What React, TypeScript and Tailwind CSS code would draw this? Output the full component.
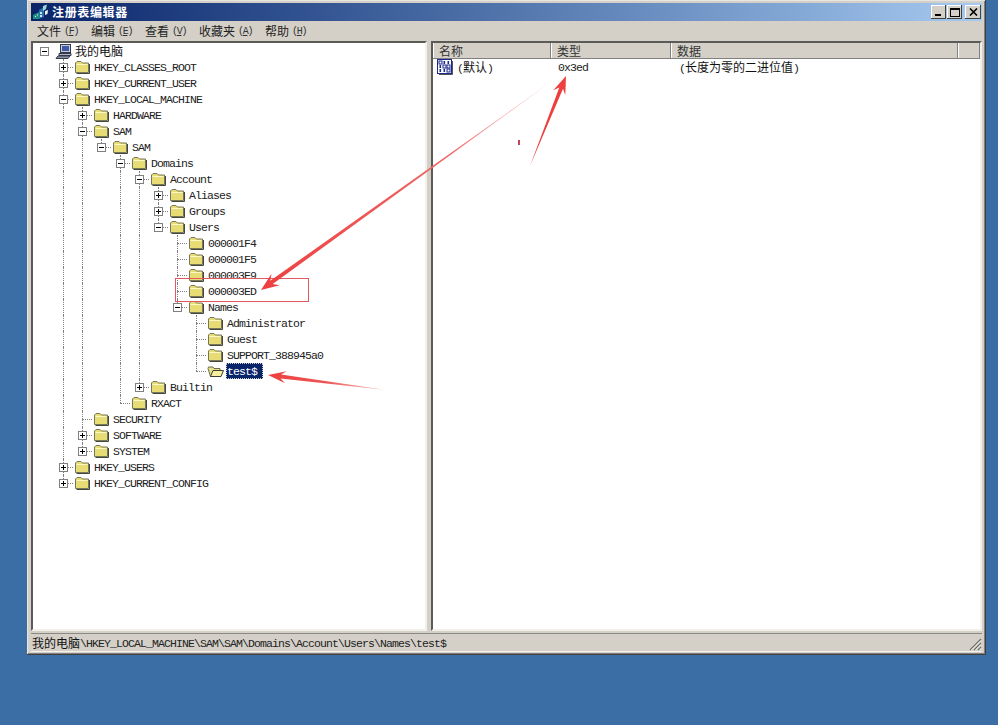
import React from "react";

type Node = { label: string; kids?: Node[]; plus?: boolean; selected?: boolean };

const tree: Node = {
  label: "我的电脑",
  kids: [
    { label: "HKEY_CLASSES_ROOT", plus: true },
    { label: "HKEY_CURRENT_USER", plus: true },
    {
      label: "HKEY_LOCAL_MACHINE",
      kids: [
        { label: "HARDWARE", plus: true },
        {
          label: "SAM",
          kids: [
            {
              label: "SAM",
              kids: [
                {
                  label: "Domains",
                  kids: [
                    {
                      label: "Account",
                      kids: [
                        { label: "Aliases", plus: true },
                        { label: "Groups", plus: true },
                        {
                          label: "Users",
                          kids: [
                            { label: "000001F4" },
                            { label: "000001F5" },
                            { label: "000003E9" },
                            { label: "000003ED" },
                            {
                              label: "Names",
                              kids: [
                                { label: "Administrator" },
                                { label: "Guest" },
                                { label: "SUPPORT_388945a0" },
                                { label: "test$", selected: true },
                              ],
                            },
                          ],
                        },
                      ],
                    },
                    { label: "Builtin", plus: true },
                  ],
                },
                { label: "RXACT" },
              ],
            },
          ],
        },
        { label: "SECURITY" },
        { label: "SOFTWARE", plus: true },
        { label: "SYSTEM", plus: true },
      ],
    },
    { label: "HKEY_USERS", plus: true },
    { label: "HKEY_CURRENT_CONFIG", plus: true },
  ],
};

const mono = "font-['Liberation_Mono',monospace] text-[11.5px] h-4 leading-[18px] tracking-[-0.9px] text-[#222]";
const cjk = "font-['Noto_Sans_CJK_SC',sans-serif] text-[12px] tracking-normal leading-4 text-[#111]";

function Folder({ open }: { open?: boolean }) {
  if (open)
    return (
      <svg width="17" height="14" viewBox="0 0 17 14" className="shrink-0">
        <path d="M3.5 12.5 L1 4.5 L1.5 3 L6 3 L7 4.5 L13 4.5 L13 12.5 Z" fill="#e9e08a" stroke="#6b6b50" />
        <path d="M3.5 12.5 L6 6.5 L16.5 6.5 L14 12.5 Z" fill="#f6f0a0" stroke="#3c3c30" />
      </svg>
    );
  return (
    <svg width="16" height="14" viewBox="0 0 16 14" className="shrink-0">
      <path d="M1.5 12.5 L1.5 3 L3 1.5 L7 1.5 L8.5 3 L14.5 3 L14.5 12.5 Z" fill="#e8dd74" stroke="#77775c" />
      <path d="M2.5 4.5 L13.5 4.5" stroke="#fbf8c4" />
      <path d="M15.5 4 L15.5 13.5 L2.5 13.5" stroke="#46463a" fill="none" />
    </svg>
  );
}

function Computer() {
  return (
    <svg width="18" height="15" viewBox="0 0 18 15" className="shrink-0">
      <rect x="5.5" y="0.5" width="10" height="8" fill="#c8cbd8" stroke="#33384c" />
      <rect x="7" y="2" width="7" height="5" fill="#3e5aa8" />
      <path d="M4 9.5 L16 9.5 L16 11.5 L4 11.5 Z" fill="#b0b4c4" stroke="#33384c" />
      <path d="M1 14.5 L3 12 L15 12 L13 14.5 Z" fill="#8f94a8" stroke="#33384c" />
    </svg>
  );
}

function BinIcon() {
  const bits = ["011", "100", "110"];
  return (
    <svg width="16" height="16" viewBox="0 0 16 16" className="shrink-0">
      <rect x="0.5" y="0.5" width="14" height="14" fill="#fff" stroke="#1c2a8c" />
      <path d="M15.5 2 V15.5 H2" stroke="#555" fill="none" />
      {bits.flatMap((row, r) =>
        row.split("").map((b, c) =>
          b === "1" ? (
            <rect key={`${r}${c}`} x={2.5 + c * 4} y={2 + r * 4} width="1.6" height="3" fill="#1c2a8c" />
          ) : (
            <rect key={`${r}${c}`} x={2 + c * 4} y={2 + r * 4} width="3" height="3" fill="none" stroke="#1c2a8c" strokeWidth="1" />
          )
        )
      )}
    </svg>
  );
}

function AppIcon() {
  return (
    <svg width="17" height="16" viewBox="0 0 17 16" className="shrink-0">
      <path d="M1 11 L7 8 L7 15 L1 15 Z" fill="#1d8f7f" />
      <path d="M3 12 h1 v1 h-1 z M5 10.5 h1 v1 h-1z" fill="#d8f4ee" />
      <path d="M7 6 L12 3 L12 13 L7 15 Z" fill="#2a6fb0" />
      <path d="M8 8 h2 v2 h-2 z M8 11 h2 v2 h-2z" fill="#cfe6f7" />
      <path d="M11 2 L15 0.5 L14 5 L11 7 Z" fill="#9fd8cf" />
      <path d="M13 7 L16 6 L15.5 10 L13 11 Z" fill="#e8f4f0" />
    </svg>
  );
}

function ExpBox({ plus }: { plus: boolean }) {
  return (
    <div className="relative z-10 w-[9px] h-[9px] border border-[#808080] bg-white flex items-center justify-center">
      <div className="relative w-[5px] h-[1px] bg-black">
        {plus && <div className="absolute left-[2px] top-[-2px] w-[1px] h-[5px] bg-black" />}
      </div>
    </div>
  );
}

function Row({
  node,
  depth,
  guides,
  last,
  isRoot,
}: {
  node: Node;
  depth: number;
  guides: boolean[];
  last: boolean;
  isRoot?: boolean;
}) {
  const expandable = node.plus || !!node.kids;
  return (
    <>
      <div className="flex items-center h-4">
        {guides.map((g, i) => (
          <div key={i} className="relative w-[19px] h-4 shrink-0">
            {g && <div className="absolute left-[9px] top-0 h-4 border-l border-dotted border-[#808080]" />}
          </div>
        ))}
        <div className="relative w-[19px] h-4 shrink-0 flex items-center justify-center">
          {!isRoot && (
            <>
              <div className={`absolute left-[9px] top-0 border-l border-dotted border-[#808080] ${last ? "h-2" : "h-4"}`} />
              <div className="absolute left-[9px] top-[8px] w-[10px] border-t border-dotted border-[#808080]" />
            </>
          )}
          {expandable && <ExpBox plus={!!node.plus} />}
        </div>
        <div className="ml-[1px] w-4 flex justify-start shrink-0">
          {isRoot ? <Computer /> : <Folder open={node.selected} />}
        </div>
        <div
          className={`ml-[3px] pl-[1px] h-4 flex items-center ${
            node.selected
              ? "pr-[6px] bg-[#0a246a] outline-1 outline-dotted outline-[#d4d0c8] -outline-offset-1"
              : "pr-[1px]"
          }`}
        >
          {isRoot ? (
            <span className={cjk}>{node.label}</span>
          ) : (
            <span className={node.selected ? `${mono} !text-white` : mono}>{node.label}</span>
          )}
        </div>
      </div>
      {node.kids?.map((k, i) => (
        <Row
          key={k.label + i}
          node={k}
          depth={depth + 1}
          guides={isRoot ? [false] : [...guides, !last]}
          last={i === node.kids!.length - 1}
        />
      ))}
    </>
  );
}

function CaptionButton({ children, wide }: { children: React.ReactNode; wide?: boolean }) {
  return (
    <div
      className={`${wide ? "w-4" : "w-[15px]"} h-[14px] bg-[#d4d0c8] shadow-[inset_-1px_-1px_#404040,inset_1px_1px_#fff] flex items-center justify-center`}
    >
      {children}
    </div>
  );
}

const menus: [string, string][] = [
  ["文件", "F"],
  ["编辑", "E"],
  ["查看", "V"],
  ["收藏夹", "A"],
  ["帮助", "H"],
];

const sunken = "border-2 border-t-[#5a5a56] border-l-[#5a5a56] border-r-[#f2f0ea] border-b-[#f2f0ea] bg-white";

export default function App() {
  return (
    <div className="relative w-[998px] h-[725px] bg-[#3a6ea5] overflow-hidden pl-[27px]">
      <div className="w-[959px] h-[655px] bg-[#d4d0c8] pt-[3px] pb-[3px] px-[4px] flex flex-col shadow-[inset_-1px_-1px_#404040,inset_1px_1px_#e8e6e0,inset_-2px_-2px_#808080]">
        {/* title bar */}
        <div className="h-[18px] shrink-0 flex items-center bg-gradient-to-r from-[#0a246a] to-[#a6caf0] pl-[1px] pr-[1px]">
          <AppIcon />
          <span className="ml-[3px] font-['Noto_Sans_CJK_SC',sans-serif] font-bold text-[12px] tracking-[0.65px] text-white">
            注册表编辑器
          </span>
          <div className="ml-auto flex items-center">
            <CaptionButton>
              <div className="w-[6px] h-[2px] bg-black mt-[6px] mr-[2px]" />
            </CaptionButton>
            <div className="w-[1px]" />
            <CaptionButton>
              <div className="w-[10px] h-[9px] border border-black border-t-2" />
            </CaptionButton>
            <div className="w-[3px]" />
            <CaptionButton wide>
              <svg width="9" height="8" viewBox="0 0 9 8">
                <path d="M1 0.5 L8 7.5 M8 0.5 L1 7.5" stroke="#000" strokeWidth="1.6" />
              </svg>
            </CaptionButton>
          </div>
        </div>
        {/* menu */}
        <div className="h-[20px] shrink-0 flex items-center pl-[6px] gap-[13px]">
          {menus.map(([m, k]) => (
            <div key={m} className="flex items-center gap-[3px]">
              <span className="font-['Noto_Sans_CJK_SC',sans-serif] text-[12px] text-[#222]">{m}</span>
              <span className="font-['Liberation_Mono',monospace] text-[10px] tracking-[-1.3px] text-[#333] w-[14px]">
                (<span className="underline">{k}</span>)
              </span>
            </div>
          ))}
        </div>
        {/* panes */}
        <div className="flex h-[590px] shrink-0">
          <div className={`w-[396px] shrink-0 pl-[2px] overflow-hidden ${sunken}`}>
            <Row node={tree} depth={0} guides={[]} last isRoot />
          </div>
          <div className="w-[4px] shrink-0" />
          <div className={`flex-1 flex flex-col overflow-hidden ${sunken}`}>
            <div className="h-4 shrink-0 flex bg-[#d4d0c8]">
              {[
                ["名称", "w-[118px]"],
                ["类型", "w-[120px]"],
                ["数据", "w-[287px]"],
                ["", "flex-1"],
              ].map(([t, w], i) => (
                <div
                  key={i}
                  className={`${w} h-4 pl-[6px] flex items-center shadow-[inset_-1px_-1px_#808080,inset_1px_0_#fff]`}
                >
                  <span className={`${cjk} text-[#333]`}>{t}</span>
                </div>
              ))}
            </div>
            <div className="flex items-center h-4 pl-[4px]">
              <div className="w-[121px] flex items-center gap-[4px]">
                <BinIcon />
                <span className={mono}>
                  (<span className={cjk}>默认</span>)
                </span>
              </div>
              <div className={`w-[121px] ${mono}`}>0x3ed</div>
              <div className={mono}>
                (<span className={cjk}>长度为零的二进位值</span>)
              </div>
            </div>
          </div>
        </div>
        {/* status */}
        <div className="mt-[2px] h-[19px] shrink-0 flex items-center relative border-b border-[#f4f2ec] border-t border-t-[#8a8a84] pl-[1px]">
          <span className={cjk}>我的电脑</span>
          <span className={mono}>\HKEY_LOCAL_MACHINE\SAM\SAM\Domains\Account\Users\Names\test$</span>
          <svg width="13" height="13" viewBox="0 0 13 13" className="absolute right-0 bottom-0">
            <path d="M12 1 L1 12 M12 5 L5 12 M12 9 L9 12" stroke="#6b6b66" strokeWidth="1.2" />
            <path d="M12 2.5 L2.5 12 M12 6.5 L6.5 12 M12 10.5 L10.5 12" stroke="#fff" strokeWidth="0.8" />
          </svg>
        </div>
      </div>

      {/* annotations drawn over the screenshot */}
      <svg width="998" height="725" className="absolute inset-0 pointer-events-none">
        <defs>
          <linearGradient id="fade" gradientUnits="userSpaceOnUse" x1="555" y1="80" x2="262" y2="288">
            <stop offset="0" stopColor="#f4b0b0" stopOpacity="0.4" />
            <stop offset="0.35" stopColor="#ee6a6a" />
            <stop offset="1" stopColor="#ee3f3f" />
          </linearGradient>
          <linearGradient id="fade2" gradientUnits="userSpaceOnUse" x1="386" y1="390" x2="268" y2="375">
            <stop offset="0" stopColor="#f8c0c0" />
            <stop offset="0.5" stopColor="#ee5555" />
            <stop offset="1" stopColor="#ee3f3f" />
          </linearGradient>
        </defs>
        <rect x="175.5" y="278.5" width="133" height="23" fill="none" stroke="#e2585e" />
        <polygon points="261,290 279.7,285.2 272.7,284 555,79 270.3,280.8 271.5,273.8" fill="url(#fade)" />
        <polygon points="566,76 565.3,95.1 563,88.8 530,166 559.3,87.4 553.3,90.3" fill="#ee3f3f" />
        <polygon points="268,375 285.1,383.2 280.6,378.6 386,390 281.1,374.6 286.6,371.3" fill="url(#fade2)" />
        <rect x="518" y="140" width="2" height="5" fill="#c8454e" />
      </svg>
    </div>
  );
}
